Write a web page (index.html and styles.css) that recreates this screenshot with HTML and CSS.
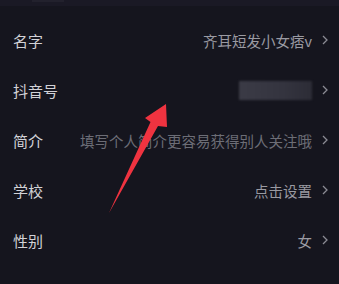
FILE: index.html
```html
<!DOCTYPE html>
<html lang="zh">
<head>
<meta charset="utf-8">
<link rel="stylesheet" href="styles.css">
</head>
<body>
<div class="page">
  <div class="topbar"><span class="topmark"></span></div>
  <div class="list">
    <div class="row">
      <span class="label">名字</span>
      <span class="value">齐耳短发小女痞v</span>
      <svg class="chev" viewBox="0 0 6 10"><path d="M1 1 L5 5 L1 9" /></svg>
    </div>
    <div class="row">
      <span class="label">抖音号</span>
      <span class="value"><span class="blurbox"></span></span>
      <svg class="chev" viewBox="0 0 6 10"><path d="M1 1 L5 5 L1 9" /></svg>
    </div>
    <div class="row">
      <span class="label">简介</span>
      <span class="value placeholder">填写个人简介更容易获得别人关注哦</span>
      <svg class="chev" viewBox="0 0 6 10"><path d="M1 1 L5 5 L1 9" /></svg>
    </div>
    <div class="row">
      <span class="label">学校</span>
      <span class="value">点击设置</span>
      <svg class="chev" viewBox="0 0 6 10"><path d="M1 1 L5 5 L1 9" /></svg>
    </div>
    <div class="row">
      <span class="label">性别</span>
      <span class="value">女</span>
      <svg class="chev" viewBox="0 0 6 10"><path d="M1 1 L5 5 L1 9" /></svg>
    </div>
  </div>
  <svg class="arrow" viewBox="0 0 339 284" width="339" height="284">
    <polygon points="109,213 158,126 167,127 166,104 145,118 150.5,122" />
  </svg>
</div>
</body>
</html>
```
FILE: styles.css
```css
html, body {
  margin: 0;
  padding: 0;
  background: #15151e;
}
.page {
  position: relative;
  width: 339px;
  height: 284px;
  overflow: hidden;
  background: #15151e;
  font-family: "Noto Sans CJK SC", "Noto Sans", sans-serif;
}
.topbar {
  height: 6px;
  background: #1a1925;
  display: flex;
  padding-left: 32px;
}
.topmark {
  width: 32px;
  height: 2px;
  background: #22212d;
}
.list {
  padding-top: 9px;
}
.row {
  height: 50px;
  display: flex;
  align-items: center;
  padding: 0 11px 0 13px;
}
.label {
  font-size: 15px;
  font-weight: 400;
  color: #d2d2d7;
}
.value {
  margin-left: auto;
  font-size: 14.5px;
  color: #9a9aa2;
  display: flex;
  align-items: center;
}
.placeholder {
  color: #6c6d76;
}
.blurbox {
  width: 73px;
  height: 19px;
  background: linear-gradient(90deg, #3b3b46, #34343f 60%, #2c2c36);
  filter: blur(1px);
}
.chev {
  width: 6px;
  height: 10px;
  margin-left: 10px;
  fill: none;
  stroke: #8c8c94;
  stroke-width: 1.3;
}
.arrow {
  position: absolute;
  left: 0;
  top: 0;
  fill: #ef3340;
}
```
